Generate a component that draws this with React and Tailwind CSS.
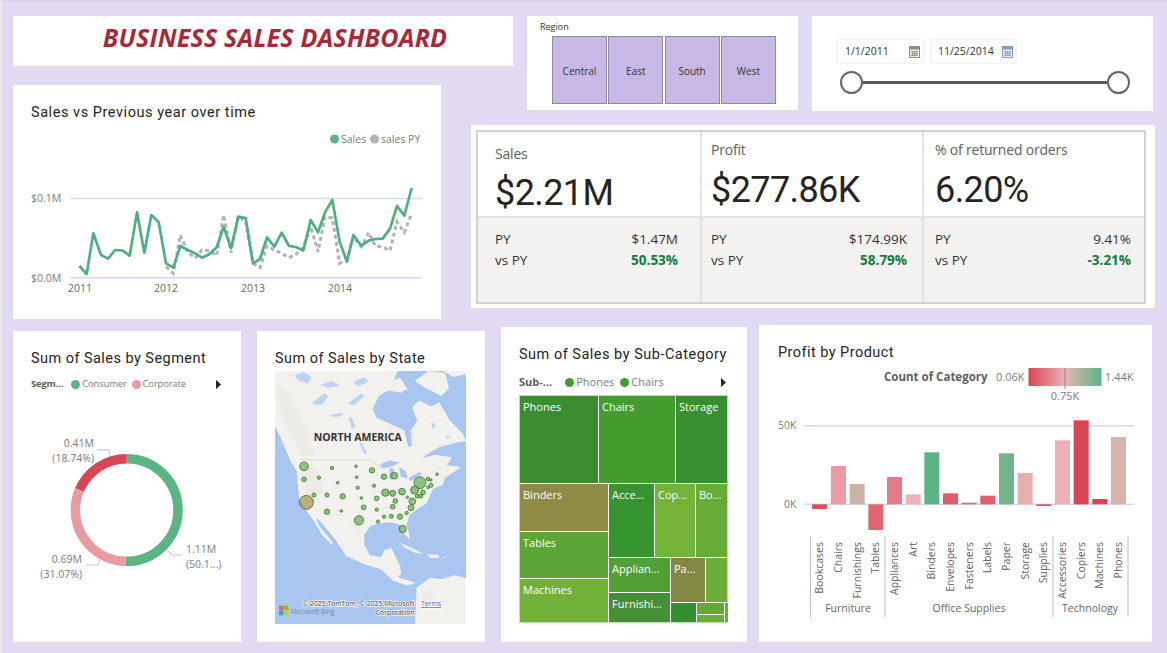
import React from 'react';

const salesPts = [[238,798],[260,822],[280,700],[303,765],[324,776],[345,750],[367,751],[389,767],[411,637],[433,758],[454,645],[476,667],[498,790],[520,803],[541,738],[563,750],[585,760],[606,773],[628,763],[650,742],[671,680],[693,745],[715,650],[737,654],[759,790],[780,777],[801,712],[823,740],[845,698],[867,738],[888,741],[910,752],[932,660],[954,697],[975,637],[997,600],[1019,725],[1041,785],[1060,705],[1084,737],[1106,722],[1126,717],[1148,716],[1170,686],[1191,618],[1213,647],[1235,564]];
const pyPts = [[498,800],[520,820],[541,705],[563,755],[585,775],[606,750],[628,752],[650,767],[671,645],[693,758],[715,647],[737,667],[759,790],[780,803],[801,738],[823,750],[845,760],[867,773],[888,763],[910,742],[932,680],[954,755],[975,650],[997,654],[1019,790],[1041,777],[1060,712],[1084,740],[1106,698],[1126,738],[1148,741],[1170,752],[1191,665],[1213,697],[1235,640]];

const toLine = (pts) => pts.map(([x, y]) => `${x / 3},${y / 3}`).join(' ');

const kpis = [
  { title: 'Sales', value: '$2.21M', py: '$1.47M', vs: '50.53%', head: 'pt-[12px]', gap: 'mt-[7px]', left: 'pl-[17px]', right: 'pr-[22px]', border: '' },
  { title: 'Profit', value: '$277.86K', py: '$174.99K', vs: '58.79%', head: 'pt-[8px]', gap: 'mt-[8px]', left: 'pl-[9px]', right: 'pr-[15px]', border: 'border-l-2 border-[#e4e2e0]' },
  { title: '% of returned orders', value: '6.20%', py: '9.41%', vs: '-3.21%', head: 'pt-[8px]', gap: 'mt-[8px]', left: 'pl-[11px]', right: 'pr-[13px]', border: 'border-l-2 border-[#e4e2e0]' },
];

const bubbles = [[147,379,13],[147,418,7],[231,384,5],[303,379,4],[351,391,8],[192,413,5],[305,412,4],[387,410,8],[418,407,10],[248,428,4],[308,443,5],[357,437,5],[495,428,18],[519,417,5],[546,403,4],[527,420,4],[528,436,6],[519,442,4],[479,450,12],[441,455,10],[391,458,11],[413,460,9],[504,457,7],[177,465,6],[216,465,6],[263,469,8],[319,474,4],[365,475,7],[457,472,4],[487,468,6],[497,468,6],[472,484,10],[421,483,7],[326,502,7],[413,500,7],[468,503,9],[216,515,8],[259,513,4],[365,509,5],[455,519,5],[387,530,5],[409,529,6],[435,530,8],[312,541,14],[369,545,5],[443,567,11]];

const bars = [
  ['Bookcases', 156, 523, 537, '#d94f5c'],
  ['Chairs', 213, 408, 523, '#ea9ba1'],
  ['Furnishings', 269, 462, 523, '#ccb3a8'],
  ['Tables', 325, 523, 600, '#e26672'],
  ['Appliances', 381, 441, 523, '#e27c85'],
  ['Art', 437, 493, 523, '#efb3b7'],
  ['Binders', 493, 367, 523, '#5ab583'],
  ['Envelopes', 549, 490, 523, '#df5c68'],
  ['Fasteners', 605, 518, 523, '#de6b75'],
  ['Labels', 661, 497, 523, '#e0616c'],
  ['Paper', 717, 370, 523, '#74b38b'],
  ['Storage', 773, 429, 523, '#e4b0b0'],
  ['Supplies', 829, 523, 528, '#d94f5c'],
  ['Accessories', 885, 331, 523, '#eeb0b5'],
  ['Copiers', 941, 271, 523, '#d84555'],
  ['Machines', 997, 507, 523, '#d84555'],
  ['Phones', 1053, 321, 523, '#d9b4ad'],
];

function CalendarIcon({ color, tint }) {
  return (
    <svg width="11" height="12" viewBox="0 0 11 12">
      <rect x="0.5" y="0.5" width="10" height="11" fill={tint} stroke={color} />
      <rect x="0.5" y="0.5" width="10" height="3" fill={color} />
      <path d="M2 5.5h7M2 7.5h7M2 9.5h7M3.5 5v5M5.5 5v5M7.5 5v5" stroke={color} strokeWidth="0.8" />
    </svg>
  );
}

function DateBox({ value, color, tint }) {
  return (
    <div className="flex h-[25px] w-[87px] items-center justify-between border border-[#f2f2f2] pl-[7px] pr-[3px] text-[10.5px] text-[#333]">
      <span>{value}</span>
      <CalendarIcon color={color} tint={tint} />
    </div>
  );
}

function LineChart() {
  return (
    <svg width="428" height="189" viewBox="13 130 428 189" className="font-['Open_Sans']">
      <circle cx="334.5" cy="139" r="4.5" fill="#5ab583" />
      <text x="341" y="143" fontSize="10.5" fill="#7a7a7a">Sales</text>
      <circle cx="374.5" cy="139" r="4.5" fill="#b3b3b3" />
      <text x="381" y="143" fontSize="10.5" fill="#7a7a7a">sales PY</text>
      <line x1="70" x2="422" y1="198.5" y2="198.5" stroke="#d3d7f1" strokeWidth="1.5" />
      <line x1="70" x2="422" y1="277.7" y2="277.7" stroke="#d3d7f1" strokeWidth="1.5" />
      <text x="31" y="202" fontSize="10.5" fill="#7a7a7a">$0.1M</text>
      <text x="31" y="282" fontSize="10.5" fill="#7a7a7a">$0.0M</text>
      <text x="68" y="292" fontSize="10.5" fill="#666">2011</text>
      <text x="154" y="292" fontSize="10.5" fill="#666">2012</text>
      <text x="241" y="292" fontSize="10.5" fill="#666">2013</text>
      <text x="328" y="292" fontSize="10.5" fill="#666">2014</text>
      <polyline points={toLine(pyPts)} fill="none" stroke="#b3b3b3" strokeWidth="3" strokeDasharray="4 3" />
      <polyline points={toLine(salesPts)} fill="none" stroke="#4fb07e" strokeWidth="2.7" strokeLinejoin="round" />
    </svg>
  );
}

function Donut() {
  const r = 51.3;
  const c = 2 * Math.PI * r;
  const segs = [
    [0, 50.19, '#5ab583'],
    [50.19, 31.07, '#e89ba1'],
    [81.26, 18.74, '#d84555'],
  ];
  return (
    <svg width="228" height="250" viewBox="13 392 228 250" className="font-['Open_Sans']">
      <g transform="rotate(-90 126.7 510)">
        {segs.map(([start, pct, color]) => (
          <circle key={color} cx="126.7" cy="510" r={r} fill="none" stroke={color} strokeWidth="9.5"
            strokeDasharray={`${(pct / 100) * c} ${c}`} strokeDashoffset={-(start / 100) * c} />
        ))}
      </g>
      <g fontSize="10.5" fill="#7a7a7a">
        <text x="94" y="447" textAnchor="end">0.41M</text>
        <text x="94" y="462" textAnchor="end">(18.74%)</text>
        <text x="186" y="553">1.11M</text>
        <text x="186" y="568">(50.1...)</text>
        <text x="82" y="563" textAnchor="end">0.69M</text>
        <text x="82" y="578" textAnchor="end">(31.07%)</text>
      </g>
      <g fill="none" stroke="#c4c4c4">
        <path d="M97 450h12l1 6" />
        <path d="M182 555h-10l-5-5" />
        <path d="M86 565h12l2-5" />
      </g>
    </svg>
  );
}

function MapView() {
  return (
    <svg width="191" height="253" viewBox="0 0 573 759" className="font-['Open_Sans'] bg-[#a9c6f1]">
      <g className="blur-[1px]">
        <path fill="#f2f1ed" stroke="#f2f1ed" strokeWidth="6" strokeLinejoin="round" d="M0 0 L365 0 L352 30 L378 62 L340 55 L310 72 L290 112 L302 142 L345 162 L385 180 L398 232 L414 226 L410 180 L430 150 L415 110 L432 92 L470 110 L492 98 L522 150 L562 192 L570 208 L540 212 L490 226 L450 250 L436 266 L482 254 L526 262 L510 285 L552 290 L508 318 L500 340 L472 352 L462 372 L452 395 L425 412 L400 432 L392 462 L402 500 L385 480 L375 458 L345 450 L310 455 L285 462 L265 490 L265 522 L282 555 L320 562 L330 540 L348 535 L372 585 L375 606 L365 621 L415 636 L395 640 L355 626 L320 592 L270 577 L215 552 L182 502 L135 446 L120 432 L125 460 L170 516 L145 492 L125 456 L100 421 L75 381 L68 300 L50 270 L20 200 L5 170 L0 165 Z" />
        {/* arctic islands and south america */}
        <path fill="#f2f1ed" d="M420 30 L460 0 L510 5 L522 50 L500 75 L450 50 Z" />
        <path fill="#f2f1ed" d="M505 0 H573 V10 L535 18 Z" />
        <path fill="#f2f1ed" d="M352 30 L375 20 L398 55 L380 62 Z" />
        <path fill="#f2f1ed" d="M420 759 L425 650 L465 620 L500 625 L540 612 L573 622 V759 Z" />
        <path fill="#f2f1ed" d="M375 516 L410 530 L445 548 L420 545 L390 530 Z" />
        <path fill="#f2f1ed" d="M458 550 L490 552 L494 560 L465 562 Z" />
        <path fill="#f2f1ed" d="M502 557 L516 559 L510 562 Z" />
        {/* terrain */}
        <g fill="#e9e8e2" opacity="0.6">
          <path d="M10 40 L40 60 L70 120 L105 200 L120 255 L85 258 L45 190 L15 120 Z" />
          <path d="M80 280 L125 290 L145 355 L118 395 L90 360 Z" />
          <path d="M190 515 L230 540 L275 558 L240 548 L200 525 Z" />
          <path d="M440 655 L478 645 L468 700 L442 715 Z" />
        </g>
        {/* lakes and channels */}
        <g fill="#b3cdf3" opacity="0.85">
          <path d="M58 14 L85 2 L110 18 L98 38 L70 28 Z" />
          <path d="M112 94 L148 68 L160 74 L142 100 L120 102 Z" />
          <path d="M135 42 L170 30 L196 44 L160 50 Z" />
          <path d="M218 98 L258 68 L270 74 L238 102 Z" />
          <path d="M234 34 L268 18 L280 32 L250 46 Z" />
          <path d="M164 132 L206 126 L198 136 L172 138 Z" />
          <path d="M220 140 L230 140 L242 168 L230 170 Z" />
          <path d="M252 214 L260 216 L276 246 L268 250 Z" />
          <path d="M470 152 L483 165 L472 173 Z" />
          <path d="M512 194 L528 197 L516 204 Z" />
        </g>
        <g fill="#a9c6f1">
          <path d="M315 280 L345 268 L375 275 L345 288 L322 292 Z" />
          <path d="M345 290 L358 295 L352 328 L342 322 Z" />
          <path d="M372 288 L392 300 L398 322 L378 318 Z" />
          <path d="M400 322 L435 302 L440 310 L408 330 Z" />
        </g>
        <g fill="none" stroke="#c8c8c0" strokeWidth="1.5">
          <path d="M72 266 H285 L320 292" />
          <path d="M102 405 L150 428 L205 432 L240 470 L265 488" stroke="#dcdcd6" />
          <path d="M452 318 L500 290" stroke="#dcdcd6" />
        </g>
      </g>
      <text x="116" y="211" fontSize="31.5" fontWeight="700" fill="#333">NORTH AMERICA</text>
      <g>
        <circle cx="94" cy="394" r="21" fill="#a59a5c" fillOpacity="0.75" stroke="#6e6428" strokeWidth="2.5" />
        {bubbles.map(([x, y, r]) => (
          <circle key={`${x}-${y}`} cx={x - 60} cy={y - 93} r={r} fill="#68a95b" fillOpacity="0.7" stroke="#33821f" strokeWidth="2.5" />
        ))}
      </g>
      <rect x="12" y="704" width="13.5" height="13.5" fill="#f25022" fillOpacity="0.8" />
      <rect x="27" y="704" width="13.5" height="13.5" fill="#7fba00" fillOpacity="0.8" />
      <rect x="12" y="719" width="13.5" height="13.5" fill="#00a4ef" fillOpacity="0.8" />
      <rect x="27" y="719" width="13.5" height="13.5" fill="#ffb900" fillOpacity="0.8" />
      <text x="47" y="728" fontSize="19.5" fill="#7a8794">Microsoft Bing</text>
      <g fontSize="20.5" fill="#333" stroke="#ffffff" strokeWidth="4" style={{ paintOrder: 'stroke' }}>
        <text x="418" y="706" textAnchor="end">© 2025 TomTom, © 2025 Microsoft</text>
        <text x="418" y="733" textAnchor="end">Corporation</text>
        <text x="438" y="706" fill="#3a5ea8" textDecoration="underline">Terms</text>
      </g>
    </svg>
  );
}

function Cell({ w, h, color, label }) {
  return (
    <div
      className="shrink-0 overflow-hidden pl-[3px] pt-[2px] text-[11px] leading-[18px] text-white"
      style={{ width: w, height: h, backgroundColor: color }}
    >
      {label}
    </div>
  );
}

function Treemap() {
  return (
    <div className="flex h-[228px] w-[209px] flex-col gap-px border border-[#bfe0b4] font-['Open_Sans']">
      <div className="flex gap-px">
        <Cell w={78} h={87} color="#3c8d30" label="Phones" />
        <Cell w={76} h={87} color="#449c30" label="Chairs" />
        <Cell w={51} h={87} color="#398f2f" label="Storage" />
      </div>
      <div className="flex gap-px">
        <div className="flex flex-col gap-px">
          <Cell w={88} h={47} color="#8f8b47" label="Binders" />
          <Cell w={88} h={46} color="#5ca537" label="Tables" />
          <Cell w={88} h={43} color="#72b138" label="Machines" />
        </div>
        <div className="flex flex-col gap-px">
          <div className="flex gap-px">
            <Cell w={45} h={73} color="#359330" label="Acce..." />
            <Cell w={40} h={73} color="#74b338" label="Cop..." />
            <Cell w={31} h={73} color="#67ab37" label="Bo..." />
          </div>
          <div className="flex gap-px">
            <div className="flex flex-col gap-px">
              <Cell w={61} h={34} color="#50a035" label="Applian..." />
              <Cell w={61} h={29} color="#458f36" label="Furnishi..." />
            </div>
            <div className="flex flex-col gap-px">
              <div className="flex gap-px">
                <Cell w={34} h={44} color="#838943" label="Pa..." />
                <Cell w={21} h={44} color="#6bad38" />
              </div>
              <div className="flex gap-px">
                <Cell w={25} h={19} color="#329030" />
                <div className="flex flex-col gap-px">
                  <Cell w={27} h={11} color="#62a937" />
                  <Cell w={27} h={7} color="#6bad38" />
                </div>
                <Cell w={1} h={19} color="#6bad38" />
              </div>
            </div>
          </div>
        </div>
      </div>
    </div>
  );
}

function BarChart() {
  return (
    <svg width="393" height="280" viewBox="759 362 393 280" className="font-['Open_Sans']">
      <g fontSize="11" fill="#7a7a7a">
        <text x="884" y="381" fontSize="11.5" fontWeight="700" fill="#605e5c">Count of Category</text>
        <text x="996" y="381">0.06K</text>
        <text x="1105" y="381">1.44K</text>
        <text x="1065" y="400" textAnchor="middle">0.75K</text>
      </g>
      <defs>
        <linearGradient id="legendGrad">
          <stop offset="0" stopColor="#d84555" />
          <stop offset="0.5" stopColor="#eab4b6" />
          <stop offset="1" stopColor="#5ab583" />
        </linearGradient>
      </defs>
      <rect x="1028.5" y="368" width="73" height="18" fill="url(#legendGrad)" />
      <line x1="1065" x2="1065" y1="368" y2="389" stroke="#8a8a8a" />
      <line x1="804" x2="1134" y1="425.7" y2="425.7" stroke="#d3d7f1" strokeWidth="1.5" />
      <line x1="804" x2="1134" y1="504.3" y2="504.3" stroke="#d3d7f1" strokeWidth="1.5" />
      <text x="778" y="429" fontSize="10.5" fill="#7a7a7a">50K</text>
      <text x="784" y="508" fontSize="10.5" fill="#7a7a7a">0K</text>
      {bars.map(([name, x, top, bottom, color]) => (
        <rect key={name} x={760 + x / 3} y={330 + top / 3} width="15" height={(bottom - top) / 3} fill={color} />
      ))}
      {bars.map(([name, x]) => {
        const cx = 760 + x / 3 + 7.5 + 3.5;
        return (
          <text key={name} transform={`rotate(-90 ${cx} 542)`} x={cx} y="542" fontSize="10.5" fill="#605e5c" textAnchor="end">{name}</text>
        );
      })}
      <g stroke="#bdbdbd">
        <line x1="810.5" x2="810.5" y1="536" y2="617" />
        <line x1="885" x2="885" y1="536" y2="617" />
        <line x1="1053" x2="1053" y1="536" y2="617" />
        <line x1="1128" x2="1128" y1="536" y2="617" />
      </g>
      <g fontSize="10.5" fill="#666" textAnchor="middle">
        <text x="848" y="612">Furniture</text>
        <text x="969" y="612">Office Supplies</text>
        <text x="1090" y="612">Technology</text>
      </g>
    </svg>
  );
}

export default function App() {
  return (
    <div className="h-[653px] w-[1167px] overflow-hidden border-l-2 border-t-2 border-l-[#e9e9e9] border-t-[#d9d4e4] bg-[#e2daf3] font-['Open_Sans']">
      <div className="grid grid-cols-[428px_30px_42px_14px_271px_14px_341px_2px] grid-rows-[50px_19px_26px_14px_183px_11px] pl-[11px] pt-[14px]">
        <div className="col-start-1 col-end-4 row-start-1 row-end-2 flex items-center justify-center bg-white pb-[6px] pl-[24px] text-[25px] font-bold italic tracking-[0.2px] text-[#a52a3a]">
          BUSINESS SALES DASHBOARD
        </div>

        <div className="col-start-5 col-end-6 row-start-1 row-end-4 h-[94px] bg-white pl-[13px] pt-[6px]">
          <div className="text-[9px] leading-[10px] text-[#333]">Region</div>
          <div className="ml-[12px] mt-[4px] flex gap-[1.3px]">
            {['Central', 'East', 'South', 'West'].map(name => (
              <div key={name} className="flex h-[68px] w-[55px] items-center justify-center border-[1.5px] border-[#8f8a99] bg-[#c8b8e6] pt-[3px] text-[10px] text-[#333]">
                {name}
              </div>
            ))}
          </div>
        </div>

        <div className="col-start-7 col-end-8 row-start-1 row-end-4 bg-white pl-[25px] pt-[23px]">
          <div className="flex gap-[6px]">
            <DateBox value="1/1/2011" color="#8d8d7d" tint="#eef2e6" />
            <DateBox value="11/25/2014" color="#7f9dc8" tint="#eef2f8" />
          </div>
          <div className="ml-[3px] mt-[7px] flex w-[290px] items-center">
            <div className="h-[23px] w-[23px] shrink-0 rounded-full border-2 border-[#666] bg-white" />
            <div className="h-[3px] flex-1 bg-[#5a5a5a]" />
            <div className="h-[23px] w-[23px] shrink-0 rounded-full border-2 border-[#666] bg-white" />
          </div>
        </div>

        <div className="col-start-1 col-end-2 row-start-3 row-end-7 bg-white">
          <div className="h-[45px] pl-[18px] pt-[18px] font-['Roboto'] text-[14.5px] leading-[20px] tracking-[0.55px] text-[#252423]">
            Sales vs Previous year over time
          </div>
          <LineChart />
        </div>

        <div className="col-start-3 col-end-9 row-start-5 row-end-6 bg-white pb-[4px] pl-[5px] pr-[9px] pt-[5px]">
          <div className="grid h-full grid-cols-3 border-2 border-[#d2d2d2]">
            {kpis.map(k => (
              <div key={k.title} className={`flex flex-col ${k.border}`}>
                <div className={`h-[86px] border-b-2 border-[#e4e2e0] bg-white ${k.left} ${k.head}`}>
                  <div className="text-[14px] leading-[20px] tracking-[-0.2px] text-[#605e5c]">{k.title}</div>
                  <div className={`font-['Roboto'] text-[36px] leading-[44px] tracking-[-0.6px] text-[#252423] ${k.gap}`}>{k.value}</div>
                </div>
                <div className={`flex-1 bg-[#f3f2f1] pt-[11px] text-[13.5px] leading-[21px] text-[#333] ${k.left} ${k.right}`}>
                  <div className="flex justify-between">
                    <span>PY</span>
                    <span>{k.py}</span>
                  </div>
                  <div className="flex justify-between">
                    <span>vs PY</span>
                    <span className="font-bold text-[#107c41]">{k.vs}</span>
                  </div>
                </div>
              </div>
            ))}
          </div>
        </div>
      </div>

      <div className="flex h-[323px] items-end pl-[11px]">
        <div className="h-[311px] w-[228px] bg-white">
          <div className="h-[45px] pl-[18px] pt-[18px] font-['Roboto'] text-[14.5px] leading-[20px] tracking-[0.45px] text-[#252423]">Sum of Sales by Segment</div>
          <div className="flex h-[16px] items-center pl-[18px] text-[9.5px] tracking-[-0.2px] text-[#7a7a7a]">
            <span className="font-bold text-[#605e5c]">Segm...</span>
            <span className="ml-[8px] mr-[2px] h-[9px] w-[9px] rounded-full bg-[#5ab583]" />
            <span>Consumer</span>
            <span className="ml-[5px] mr-[2px] h-[9px] w-[9px] rounded-full bg-[#e89ba1]" />
            <span>Corporate</span>
            <svg width="5" height="9" viewBox="0 0 5 9" className="ml-[30px]"><path d="M0 0l5 4.5-5 4.5z" fill="#252423" /></svg>
          </div>
          <Donut />
        </div>

        <div className="ml-[16px] h-[311px] w-[228px] bg-white pl-[18px]">
          <div className="h-[40px] pt-[18px] font-['Roboto'] text-[14.5px] leading-[20px] tracking-[0.45px] text-[#252423]">Sum of Sales by State</div>
          <MapView />
        </div>

        <div className="ml-[16px] h-[315px] w-[246px] bg-white pl-[18px]">
          <div className="pt-[18px] font-['Roboto'] text-[14.5px] leading-[20px] tracking-[0.5px] text-[#252423]">Sum of Sales by Sub-Category</div>
          <div className="flex h-[30px] items-center pt-[4px] text-[11px] text-[#7a7a7a]">
            <span className="font-bold text-[#605e5c]">Sub-...</span>
            <span className="ml-[13px] mr-[2px] h-[9px] w-[9px] rounded-full bg-[#449c30]" />
            <span>Phones</span>
            <span className="ml-[6px] mr-[2px] h-[9px] w-[9px] rounded-full bg-[#449c30]" />
            <span>Chairs</span>
            <svg width="5" height="9" viewBox="0 0 5 9" className="ml-[57px]"><path d="M0 0l5 4.5-5 4.5z" fill="#252423" /></svg>
          </div>
          <Treemap />
        </div>

        <div className="ml-[12px] h-[317px] w-[393px] bg-white">
          <div className="h-[37px] pl-[19px] pt-[18px] font-['Roboto'] text-[14.5px] leading-[20px] tracking-[0.45px] text-[#252423]">Profit by Product</div>
          <BarChart />
        </div>
      </div>
    </div>
  );
}
